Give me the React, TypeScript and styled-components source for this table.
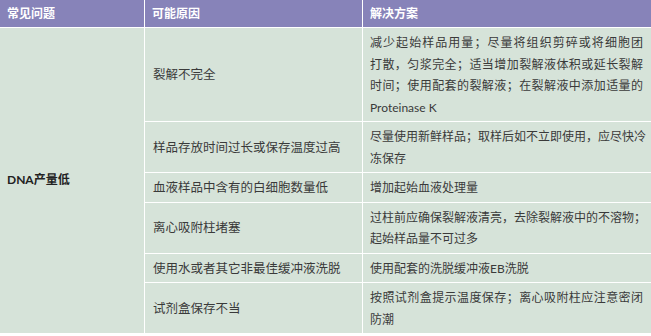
import React from 'react';
import styled, {createGlobalStyle} from 'styled-components';

type Cause = {
    reason: string;
    solution: string[];
};

const causes: Cause[] = [
    {
        reason: '裂解不完全',
        solution: [
            '减少起始样品用量；尽量将组织剪碎或将细胞团',
            '打散，匀浆完全；适当增加裂解液体积或延长裂解',
            '时间；使用配套的裂解液；在裂解液中添加适量的',
            'Proteinase K',
        ],
    },
    {
        reason: '样品存放时间过长或保存温度过高',
        solution: ['尽量使用新鲜样品；取样后如不立即使用，应尽快冷', '冻保存'],
    },
    {
        reason: '血液样品中含有的白细胞数量低',
        solution: ['增加起始血液处理量'],
    },
    {
        reason: '离心吸附柱堵塞',
        solution: ['过柱前应确保裂解液清亮，去除裂解液中的不溶物；', '起始样品量不可过多'],
    },
    {
        reason: '使用水或者其它非最佳缓冲液洗脱',
        solution: ['使用配套的洗脱缓冲液EB洗脱'],
    },
    {
        reason: '试剂盒保存不当',
        solution: ['按照试剂盒提示温度保存；离心吸附柱应注意密闭', '防潮'],
    },
];

const App = () => {
    return (
        <>
            <GlobalStyle/>
            <Table>
                <HeadCell>{'常见问题'}</HeadCell>
                <HeadCell>{'可能原因'}</HeadCell>
                <HeadCell>{'解决方案'}</HeadCell>

                <ProblemCell $span={causes.length}>{'DNA产量低'}</ProblemCell>
                {causes.map((c) => (
                    <React.Fragment key={c.reason}>
                        <ReasonCell>{c.reason}</ReasonCell>
                        <SolutionCell>
                            {c.solution.map((line, i) => (
                                <Line
                                    key={line}
                                    $justify={i < c.solution.length - 1}
                                >
                                    {line}
                                </Line>
                            ))}
                        </SolutionCell>
                    </React.Fragment>
                ))}
            </Table>
        </>
    );
};

const GlobalStyle = createGlobalStyle`
    html, body {
        margin: 0;
        padding: 0;
        background: #ffffff;
    }

    body {
        font-family: "Lato", "Noto Sans CJK SC", sans-serif;
        -webkit-font-smoothing: antialiased;
    }
`;

const Table = styled.div`
    display: grid;
    grid-template-columns: 144px 217px minmax(0, 1fr);
    gap: 1px;
    width: 651px;
    background: #ffffff;
    border-bottom: 1px solid #ffffff;
`;

const HeadCell = styled.div`
    height: 27px;
    line-height: 27px;
    padding: 0 8px 0 7px;
    background: #8783b9;
    color: #ffffff;
    font-size: 12px;
    font-weight: 700;
    white-space: nowrap;
`;

const BodyCell = styled.div`
    background: #d6e3d9;
    color: #3a3a3a;
    font-size: 12.5px;
    line-height: 21.5px;
    padding: 4px 8px 3px;
    white-space: nowrap;
`;

const ProblemCell = styled(BodyCell)<{$span: number}>`
    grid-row: span ${(p) => p.$span};
    display: flex;
    align-items: center;
    padding: 0 0 2px 7px;
    color: #222222;
    font-size: 12px;
    font-weight: 700;
`;

const ReasonCell = styled(BodyCell)`
    display: flex;
    align-items: center;
    padding-left: 8px;
`;

const SolutionCell = styled(BodyCell)`
    padding: 4px 8px 3px 7px;
    font-size: 12px;
`;

const Line = styled.div<{$justify: boolean}>`
    text-align: ${(p) => (p.$justify ? 'justify' : 'left')};
    text-align-last: ${(p) => (p.$justify ? 'justify' : 'left')};
`;

export default App;
